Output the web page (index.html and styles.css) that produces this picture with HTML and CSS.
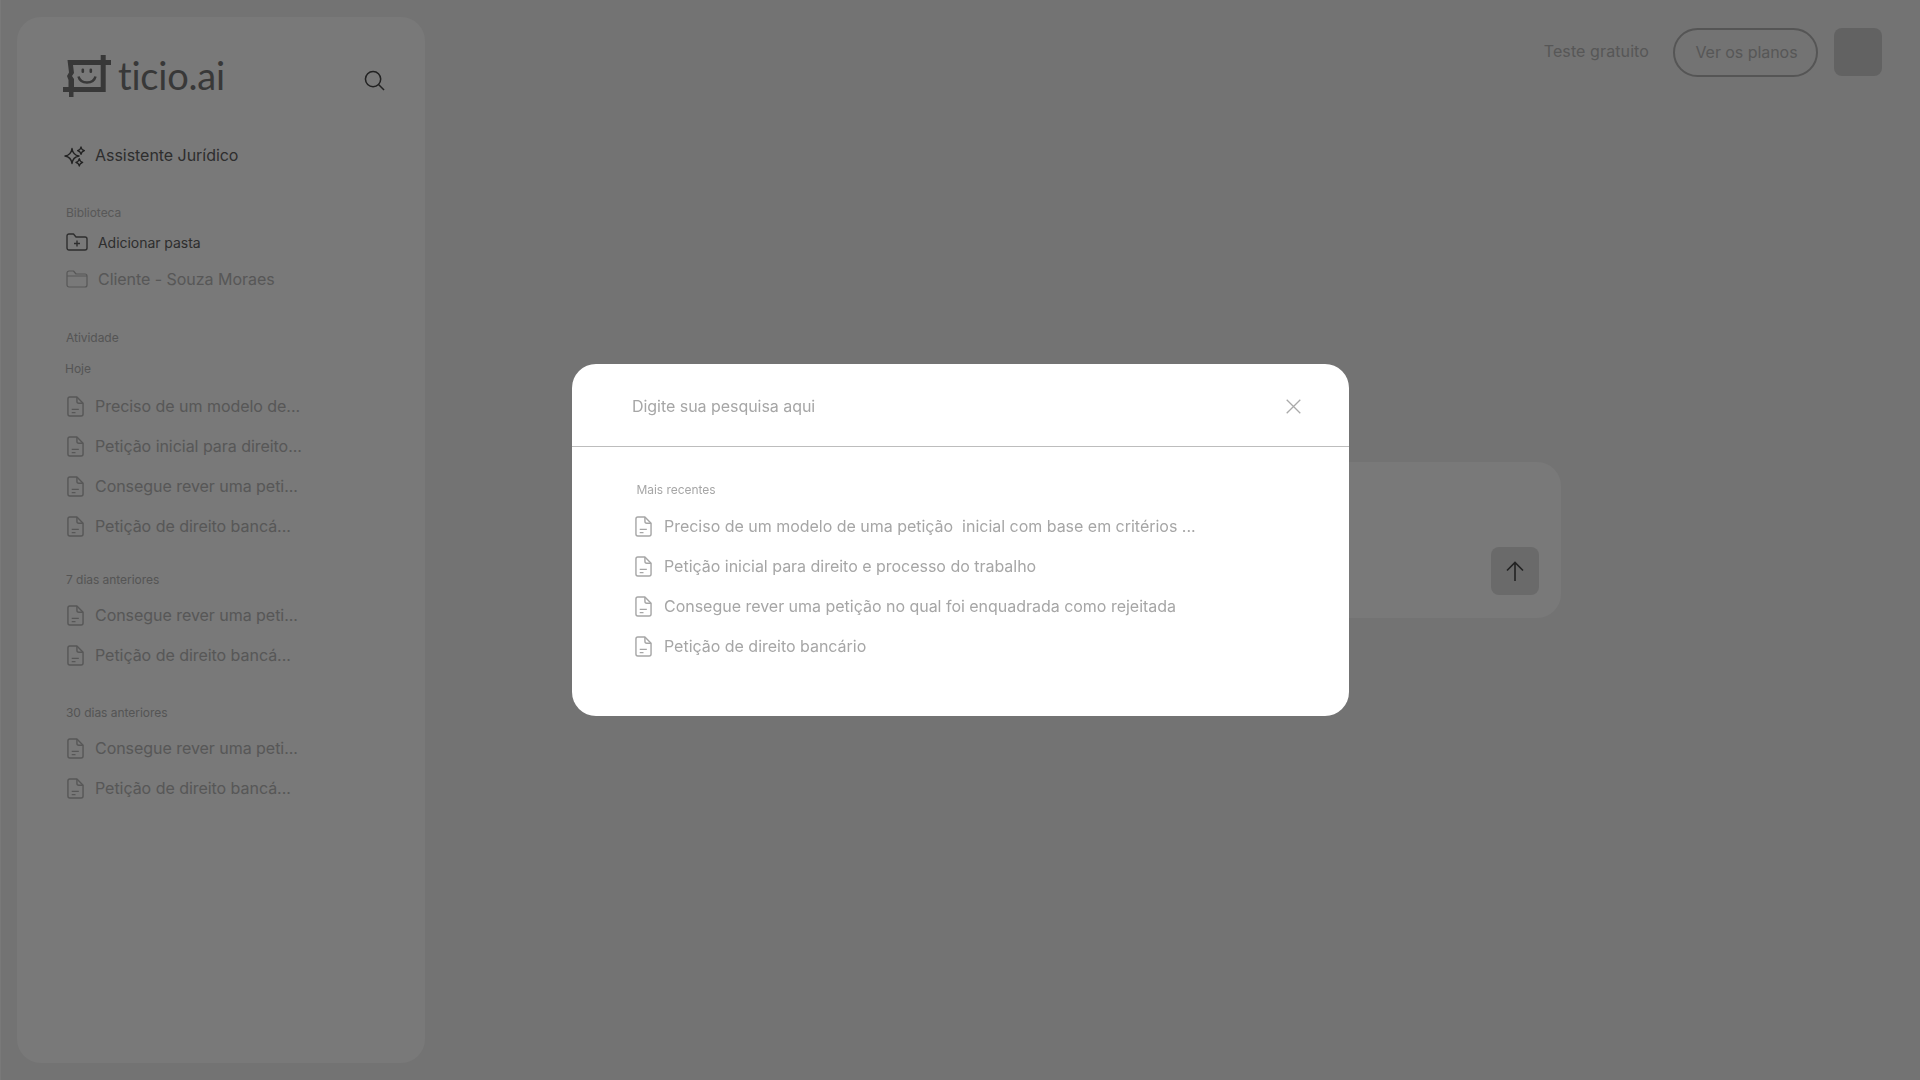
FILE: index.html
```html
<!DOCTYPE html>
<html lang="pt-BR">
<head>
<meta charset="utf-8">
<title>ticio.ai</title>
<link rel="stylesheet" href="styles.css">
</head>
<body>
<svg class="sprite" width="0" height="0" aria-hidden="true">
  <symbol id="doc" viewBox="0 0 18 22">
    <path d="M3 1h7.500L17 7.500V19a2 2 0 0 1-2 2H3a2 2 0 0 1-2-2V3a2 2 0 0 1 2-2z" fill="none" stroke="currentColor" stroke-width="1.500" stroke-linejoin="round"/>
    <path d="M10.500 1v4.500a2 2 0 0 0 2 2H17M5 14h7.500M5 17.500h4" fill="none" stroke="currentColor" stroke-width="1.500"/>
  </symbol>
</svg>
<div class="app">
  <aside class="sidebar">
    <div class="brand">
      <svg class="logo" viewBox="0 0 48 42" aria-hidden="true">
        <path d="M4.500 5H37.700V0h5v5H48v5h-5.300v27H10.500v5H6v-5H0v-5h5.500v-7L4 21l2-3.500zM10 10l1 8-2 3 2 3v8h26.700V10z" fill="currentColor" fill-rule="evenodd"/>
        <rect x="18.500" y="13.500" width="2.600" height="4.500" rx="1.200" fill="currentColor"/>
        <rect x="26.500" y="13.500" width="2.600" height="4.500" rx="1.200" fill="currentColor"/>
        <path d="M15.500 21.500c1 4 4.500 6 8.500 6s7.500-2 8.500-6" fill="none" stroke="currentColor" stroke-width="2.500"/>
      </svg>
      <span class="wordmark">ticio.ai</span>
      <svg class="search" viewBox="0 0 22 22" aria-hidden="true">
        <circle cx="9.500" cy="9.500" r="8" fill="none" stroke="currentColor" stroke-width="1.600"/>
        <path d="M15.500 15.500l5.500 5.500" stroke="currentColor" stroke-width="1.600"/>
      </svg>
    </div>
    <div class="assistant">
      <svg class="sparkle" viewBox="0 0 22 22" aria-hidden="true">
        <path d="M8 2.500C8.600 7 10.500 9.300 15 10 10.500 10.700 8.600 13 8 17.500 7.400 13 5.500 10.700 1 10 5.500 9.300 7.400 7 8 2.500z" fill="none" stroke="currentColor" stroke-width="1.400" stroke-linejoin="round"/>
        <path d="M17 1c.3 2 1.200 3.100 3.400 3.700-2.200.6-3.100 1.700-3.400 3.700-.3-2-1.200-3.100-3.400-3.700C15.800 4.100 16.700 3 17 1zM15.300 12.600c.3 2 1.200 3.100 3.400 3.700-2.200.6-3.100 1.700-3.400 3.700-.3-2-1.200-3.100-3.400-3.700 2.200-.6 3.100-1.700 3.400-3.700z" fill="none" stroke="currentColor" stroke-width="1.300" stroke-linejoin="round"/>
      </svg>
      <span>Assistente Jurídico</span>
    </div>
    <p class="label label-library">Biblioteca</p>
    <div class="folder-add">
      <svg class="folder-icon" viewBox="0 0 22 18" aria-hidden="true">
        <path d="M1 3a2 2 0 0 1 2-2h4.500l2.500 3h9a2 2 0 0 1 2 2v9a2 2 0 0 1-2 2H3a2 2 0 0 1-2-2z" fill="none" stroke="currentColor" stroke-width="1.400" stroke-linejoin="round"/>
        <path d="M11 7.500v6M8 10.500h6" stroke="currentColor" stroke-width="1.400"/>
      </svg>
      <span>Adicionar pasta</span>
    </div>
    <div class="folder-item">
      <svg class="folder-icon" viewBox="0 0 22 18" aria-hidden="true">
        <path d="M1 3a2 2 0 0 1 2-2h4.500l2.500 3h9a2 2 0 0 1 2 2v9a2 2 0 0 1-2 2H3a2 2 0 0 1-2-2zM1 6h20" fill="none" stroke="currentColor" stroke-width="1.200" stroke-linejoin="round"/>
      </svg>
      <span>Cliente - Souza Moraes</span>
    </div>
    <p class="label label-activity">Atividade</p>
    <p class="label label-today">Hoje</p>
    <ul class="docs">
      <li><svg class="doc"><use href="#doc"/></svg>Preciso de um modelo de...</li>
      <li><svg class="doc"><use href="#doc"/></svg>Petição inicial para direito...</li>
      <li><svg class="doc"><use href="#doc"/></svg>Consegue rever uma peti...</li>
      <li><svg class="doc"><use href="#doc"/></svg>Petição de direito bancá...</li>
    </ul>
    <p class="label label-group">7 dias anteriores</p>
    <ul class="docs docs-tight">
      <li><svg class="doc"><use href="#doc"/></svg>Consegue rever uma peti...</li>
      <li><svg class="doc"><use href="#doc"/></svg>Petição de direito bancá...</li>
    </ul>
    <p class="label label-group label-group-last">30 dias anteriores</p>
    <ul class="docs docs-tight">
      <li><svg class="doc"><use href="#doc"/></svg>Consegue rever uma peti...</li>
      <li><svg class="doc"><use href="#doc"/></svg>Petição de direito bancá...</li>
    </ul>
  </aside>
  <main class="main">
    <header class="topbar">
      <span class="trial">Teste gratuito</span>
      <button class="plans">Ver os planos</button>
      <div class="avatar"></div>
    </header>
    <section class="composer">
      <div class="send">
        <svg class="arrow" viewBox="0 0 18 20" aria-hidden="true">
          <path d="M9 20V1.500M1 9.500l8-8 8 8" fill="none" stroke="currentColor" stroke-width="1.600"/>
        </svg>
      </div>
    </section>
  </main>
</div>
<div class="overlay">
  <div class="modal">
    <div class="modal-head">
      <span class="placeholder">Digite sua pesquisa aqui</span>
      <svg class="close" viewBox="0 0 15 15" aria-hidden="true">
        <path d="M.7.7l13.600 13.600M14.300.7L.7 14.300" stroke="currentColor" stroke-width="1.300"/>
      </svg>
    </div>
    <div class="modal-body">
      <p class="recent">Mais recentes</p>
      <ul class="results">
        <li><svg class="doc"><use href="#doc"/></svg>Preciso de um modelo de uma petição&nbsp; inicial com base em critérios ...</li>
        <li><svg class="doc"><use href="#doc"/></svg>Petição inicial para direito e processo do trabalho</li>
        <li><svg class="doc"><use href="#doc"/></svg>Consegue rever uma petição no qual foi enquadrada como rejeitada</li>
        <li><svg class="doc"><use href="#doc"/></svg>Petição de direito bancário</li>
      </ul>
    </div>
  </div>
</div>
</body>
</html>
```
FILE: styles.css
```css
* { box-sizing: border-box; }
html, body { margin: 0; height: 100%; }
body {
  font-family: Inter, "Liberation Sans", sans-serif;
  background: #e6e6e6;
  color: #555;
  overflow: hidden;
  letter-spacing: -.04px;
}
p, ul { margin: 0; padding: 0; }
ul { list-style: none; }
.sprite { position: absolute; }

.app {
  display: flex;
  height: 1080px;
  padding: 17px 38px 17px 16px;
  border-left: 1px solid #f2f2f2;
}

.sidebar {
  width: 408px;
  flex: none;
  background: #f2f2f2;
  border-radius: 24px;
  padding: 38px 0 0 48px;
  display: flex;
  flex-direction: column;
}
.brand { display: flex; align-items: flex-start; height: 42px; color: #707070; }
.logo { width: 48px; height: 42px; flex: none; margin-left: -2px; }
.wordmark {
  font-family: Lato, sans-serif;
  font-size: 38px;
  line-height: 40px;
  margin: 0 0 0 7px;
  letter-spacing: -.2px;
}
.search { width: 21px; height: 21px; color: #444; margin: 15px 40px 0 auto; flex: none; }

.assistant {
  display: flex;
  align-items: center;
  gap: 9px;
  margin-top: 46px;
  height: 24px;
  font-size: 16px;
  color: #5c5c5c;
}
.sparkle { width: 22px; height: 22px; margin: 4px 0 0 -1px; color: #444; flex: none; }

.label { font-size: 12px; line-height: 16px; color: #b0b0b0; }
.label-library { margin: 38px 0 0 1px; }
.folder-add {
  display: flex; align-items: center; gap: 10px;
  margin: 10px 0 0 1px; height: 22px; font-size: 14px; color: #5c5c5c;
}
.folder-icon { width: 22px; height: 18px; flex: none; }
.folder-item {
  display: flex; align-items: center; gap: 10px;
  margin: 15px 0 0 1px; height: 22px; font-size: 16px; color: #aeaeae;
}
.label-activity { margin: 40px 0 0 1px; color: #aaa; }
.label-today { margin: 15px 0 0 0; color: #aaa; }

.docs { margin-top: 9px; }
.docs-tight { margin-top: 7px; }
.docs li {
  display: flex; align-items: center; gap: 11.5px;
  height: 40px; font-size: 16px; color: #aeaeae;
}
.doc { width: 17px; height: 21px; flex: none; margin-left: 1.5px; }
.label-group { margin-top: 26px; margin-left: 1px; color: #aaa; }
.label-group-last { margin-top: 30px; }

.main { flex: 1; display: flex; flex-direction: column; }
.topbar { display: flex; align-items: flex-start; justify-content: flex-end; height: 49px; margin-top: 11px; letter-spacing: 0; }
.trial { font-size: 16px; line-height: 47px; color: #aeaeae; margin-right: 24px; letter-spacing: .1px; }
.plans {
  width: 145px; height: 49px;
  font: 16px Inter, sans-serif;
  letter-spacing: -.05px;
  color: #aeaeae;
  background: transparent;
  border: 2px solid #aaa;
  border-radius: 25px;
  padding: 0 0 1px 2px;
}
.avatar { width: 48px; height: 48px; border-radius: 8px; background: #c4c4c4; margin-left: 16px; }

.composer {
  align-self: flex-end;
  width: 900px;
  height: 156px;
  margin: 385px 321px 0 0;
  background: #f2f2f2;
  border-radius: 24px;
  display: flex;
  justify-content: flex-end;
  align-items: flex-end;
  padding: 0 22px 23px 0;
}
.send { width: 48px; height: 48px; border-radius: 8px; background: #d4d4d4; display: flex; align-items: center; justify-content: center; }
.arrow { width: 18px; height: 20px; color: #444; }

.overlay {
  position: fixed;
  inset: 0;
  background: rgba(0, 0, 0, .5);
  display: flex;
  align-items: center;
  justify-content: center;
}
.modal { width: 777px; height: 352px; background: #fff; border-radius: 24px; overflow: hidden; }
.modal-head {
  height: 83px;
  border-bottom: 1px solid #bdbdbd;
  display: flex;
  align-items: center;
  justify-content: space-between;
  padding: 2px 48px 0 60.5px;
}
.placeholder { font-size: 16px; color: #a6a6a6; }
.close { width: 15px; height: 15px; color: #aaa; }
.modal-body { padding: 35px 0 0 62px; }
.recent { font-size: 12px; line-height: 16px; color: #a6a6a6; margin-left: 3px; }
.results { margin-top: 8px; }
.results li {
  display: flex; align-items: center; gap: 12px;
  height: 40px; font-size: 16px; color: #a6a6a6;
  letter-spacing: -.02px;
}
```
